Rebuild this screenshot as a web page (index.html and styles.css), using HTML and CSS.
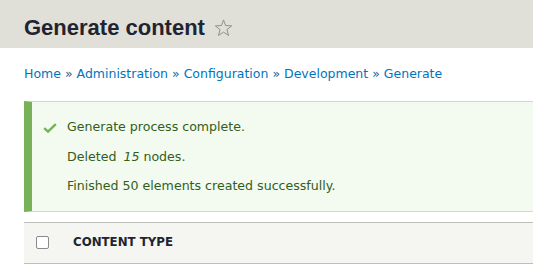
FILE: index.html
```html
<!DOCTYPE html>
<html lang="en">
<head>
    <meta charset="UTF-8">
    <meta name="viewport" content="width=device-width, initial-scale=1.0">
    <title>Generate content</title>
    <link rel="stylesheet" href="styles.css">
</head>
<body>
    <header class="page-header">
        <h1 class="page-title">
            Generate content
            <svg class="shortcut-star" width="19" height="19" viewBox="0 0 20 20">
                <polygon points="10,1 12.2,6.9 18.6,7.2 13.6,11.2 15.3,17.3 10,13.8 4.7,17.3 6.4,11.2 1.4,7.2 7.8,6.9" fill="none" stroke="#8c8c80" stroke-width="1" stroke-linejoin="round"/>
            </svg>
        </h1>
    </header>

    <main class="content">
        <nav class="breadcrumb">
            <a href="#">Home</a> <span class="sep">»</span>
            <a href="#">Administration</a> <span class="sep">»</span>
            <a href="#">Configuration</a> <span class="sep">»</span>
            <a href="#">Development</a> <span class="sep">»</span>
            <a href="#">Generate</a>
        </nav>

        <!-- Сообщение об успехе -->
        <div class="messages messages-status">
            <svg class="messages-icon" width="14" height="10" viewBox="0 0 14 10">
                <path d="M1.2 5.2 L5 8.6 L12.8 1.2" fill="none" stroke="#73b355" stroke-width="2.4"/>
            </svg>
            <ul class="messages-list">
                <li>Generate process complete.</li>
                <li>Deleted <em class="placeholder">15</em> nodes.</li>
                <li>Finished 50 elements created successfully.</li>
            </ul>
        </div>

        <table class="content-table">
            <thead>
                <tr>
                    <th class="select-all"><input type="checkbox" class="form-checkbox"></th>
                    <th>Content type</th>
                </tr>
            </thead>
        </table>
    </main>
</body>
</html>
```

FILE: styles.css
```css
* {
    margin: 0;
    padding: 0;
    box-sizing: border-box;
}

body {
    background-color: #ffffff;
    color: #333333;
    font-family: "DejaVu Sans", "Lucida Grande", sans-serif;
    overflow: hidden;
}

.page-header {
    background-color: #e0e0d8;
    height: 48px;
    padding: 16px 24px 0;
}

.page-title {
    display: flex;
    align-items: center;
    gap: 9px;
    font-family: "Liberation Sans", Arial, sans-serif;
    font-size: 22px;
    line-height: 24px;
    font-weight: bold;
    color: #222330;
}

.content {
    padding-left: 24px;
}

.breadcrumb {
    margin-top: 17px;
    font-size: 12.5px;
    line-height: 18px;
    color: #0074bd;
}

.breadcrumb a {
    color: #0074bd;
    text-decoration: none;
}

.breadcrumb .sep {
    color: #2a5f8c;
}

/* Блок сообщений (справа уходит за край окна) */
.messages {
    display: flex;
    align-items: flex-start;
    gap: 10px;
    margin-top: 18px;
    padding: 16px 0 16px 11px;
    background-color: #f3faef;
    border: 1px solid #c9e1bd;
    border-left: 8px solid #77b259;
    border-right: 0;
    color: #325e1c;
    font-size: 12.6px;
    line-height: 18px;
}

.messages-icon {
    flex-shrink: 0;
    margin-top: 5px;
}

.messages-list {
    list-style: none;
}

.messages-list li {
    margin-bottom: 11.5px;
}

.messages-list li:last-child {
    margin-bottom: 0;
}

.placeholder {
    font-style: italic;
    margin-left: 3px;
}

/* Таблица */
.content-table {
    width: 100%;
    margin-top: 10px;
    border-collapse: collapse;
}

.content-table th {
    padding: 12px 12px 13px;
    background-color: #f5f5f2;
    border-top: 1px solid #bfbfba;
    border-bottom: 1px solid #bfbfba;
    text-align: left;
    text-transform: uppercase;
    font-size: 11.8px;
    line-height: 15px;
    font-weight: bold;
    color: #222330;
}

.content-table .select-all {
    width: 37px;
}

.form-checkbox {
    appearance: none;
    display: block;
    width: 13px;
    height: 13px;
    background-color: #ffffff;
    border: 1px solid #8a8a8a;
    border-radius: 2px;
}
```
